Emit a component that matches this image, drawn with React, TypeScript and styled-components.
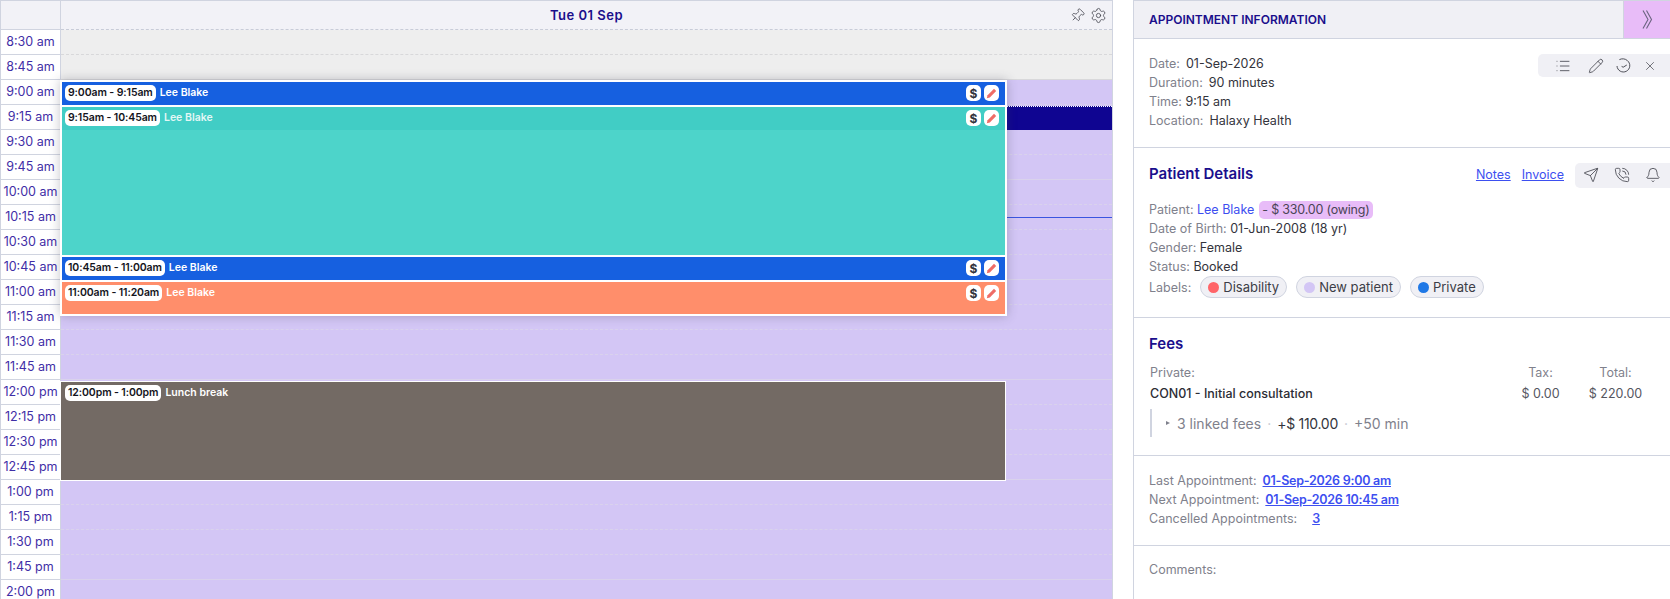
import React from "react";
import styled, { createGlobalStyle } from "styled-components";
import { Bell, List, Pencil, PhoneCall, Pin, Send, Settings, X } from "lucide-react";

const GlobalStyle = createGlobalStyle`
  html, body { margin: 0; padding: 0; background: #fff; }
  body { font-family: Inter, "Noto Sans", sans-serif; font-size: 13px; color: #33343c; overflow: hidden; }
`;

const times = [
  "8:30 am", "8:45 am", "9:00 am", "9:15 am", "9:30 am", "9:45 am", "10:00 am", "10:15 am",
  "10:30 am", "10:45 am", "11:00 am", "11:15 am", "11:30 am", "11:45 am", "12:00 pm", "12:15 pm",
  "12:30 pm", "12:45 pm", "1:00 pm", "1:15 pm", "1:30 pm", "1:45 pm", "2:00 pm",
];

const popupEvents = [
  { time: "9:00am - 9:15am", name: "Lee Blake", color: "#1660e0", height: 23, faded: false },
  { time: "9:15am - 10:45am", name: "Lee Blake", color: "#4dd4ca", band: "#41cdc5", height: 148, faded: true },
  { time: "10:45am - 11:00am", name: "Lee Blake", color: "#1660e0", height: 23, faded: false },
  { time: "11:00am - 11:20am", name: "Lee Blake", color: "#ff8e6b", height: 32, faded: false },
];

export default function App() {
  return (
    <Page>
      <GlobalStyle />
      <Calendar>
        <CornerCell />
        <DayHeader>
          Tue 01 Sep
          <HeaderIcons>
            <Pin size={15} strokeWidth={1.3} style={{ transform: "rotate(45deg)" }} />
            <Settings size={17} strokeWidth={1.2} />
          </HeaderIcons>
        </DayHeader>
        <TimeColumn>
          {times.map((t) => (
            <TimeCell key={t}>{t}</TimeCell>
          ))}
        </TimeColumn>
        <DayColumn>
          {times.map((t, i) => (
            <Slot key={t} $closed={i < 2} $hour={(i + 3) % 4 === 0} />
          ))}
          <SelectedBar />
          <NowLine />
          <Popup>
            {popupEvents.map((ev) => (
              <EventCard key={ev.time} $color={ev.color} $height={ev.height}>
                <EventHead $band={ev.band} $faded={ev.faded}>
                  <TimePill>{ev.time}</TimePill>
                  <EventName>{ev.name}</EventName>
                  <EventChips>
                    <Chip>$</Chip>
                    <Chip>
                      <RedPencil />
                    </Chip>
                  </EventChips>
                </EventHead>
              </EventCard>
            ))}
          </Popup>
          <LunchBlock>
            <EventHead>
              <TimePill>12:00pm - 1:00pm</TimePill>
              <EventName>Lunch break</EventName>
            </EventHead>
          </LunchBlock>
        </DayColumn>
      </Calendar>

      <Panel>
        <PanelHeader>
          <PanelTitle>APPOINTMENT INFORMATION</PanelTitle>
          <CollapseButton>
            <svg width="11" height="19" viewBox="0 0 11 19" fill="none" stroke="#6b6480" strokeWidth="1.1">
              <path d="M1 .5l5 9-5 9" />
              <path d="M4.5 .5l5 9-5 9" />
            </svg>
          </CollapseButton>
        </PanelHeader>

        <InfoSection>
          <div>
            <InfoLine><Label>Date:</Label><Gap />01-Sep-2026</InfoLine>
            <InfoLine><Label>Duration:</Label><Gap />90 minutes</InfoLine>
            <InfoLine><Label>Time:</Label> 9:15 am</InfoLine>
            <InfoLine><Label>Location:</Label><Gap />Halaxy Health</InfoLine>
          </div>
          <AppointmentToolbar>
            <List size={16} strokeWidth={1.2} />
            <Pencil size={16} strokeWidth={1.2} />
            <ClockSweep />
            <X size={14} strokeWidth={1.2} />
          </AppointmentToolbar>
        </InfoSection>

        <PatientSection>
          <SectionHead>
            <SectionTitle>Patient Details</SectionTitle>
            <HeadActions>
              <TextLink href="#">Notes</TextLink>
              <TextLink href="#">Invoice</TextLink>
              <PatientToolbar>
                <Send size={16} strokeWidth={1.2} />
                <PhoneCall size={16} strokeWidth={1.2} />
                <Bell size={16} strokeWidth={1.2} />
              </PatientToolbar>
            </HeadActions>
          </SectionHead>
          <InfoLine>
            <Label>Patient:</Label> <PatientName>Lee Blake</PatientName>
            <OwingBadge>- $ 330.00 (owing)</OwingBadge>
          </InfoLine>
          <InfoLine><Label>Date of Birth:</Label> 01-Jun-2008 (18 yr)</InfoLine>
          <InfoLine><Label>Gender:</Label> Female</InfoLine>
          <InfoLine><Label>Status:</Label> Booked</InfoLine>
          <LabelRow>
            <Label>Labels:</Label>
            <Tag><TagDot $color="#ff6468" />Disability</Tag>
            <Tag><TagDot $color="#d3c6f5" />New patient</Tag>
            <Tag><TagDot $color="#1f78e6" />Private</Tag>
          </LabelRow>
        </PatientSection>

        <FeesSection>
          <SectionTitle>Fees</SectionTitle>
          <FeesGrid>
            <Label>Private:</Label>
            <FeeHead>Tax:</FeeHead>
            <FeeHead>Total:</FeeHead>
            <FeeName>CON01 - Initial consultation</FeeName>
            <FeeAmount>$ 0.00</FeeAmount>
            <FeeAmount>$ 220.00</FeeAmount>
          </FeesGrid>
          <LinkedFees>
            <Caret />
            3 linked fees
            <Dot>·</Dot>
            <LinkedAmount>+$ 110.00</LinkedAmount>
            <Dot>·</Dot>
            +50 min
          </LinkedFees>
        </FeesSection>

        <HistorySection>
          <InfoLine><Label>Last Appointment:</Label><Gap /><HistoryLink href="#">01-Sep-2026 9:00 am</HistoryLink></InfoLine>
          <InfoLine><Label>Next Appointment:</Label><Gap /><HistoryLink href="#">01-Sep-2026 10:45 am</HistoryLink></InfoLine>
          <InfoLine><Label>Cancelled Appointments:</Label><WideGap /><HistoryLink href="#">3</HistoryLink></InfoLine>
        </HistorySection>

        <CommentsSection>
          <Label>Comments:</Label>
        </CommentsSection>
      </Panel>
    </Page>
  );
}

function RedPencil() {
  return (
    <svg width="11" height="11" viewBox="0 0 11 11">
      <path d="M8 .8l2.2 2.2-6.4 6.4L.8 10.2l.8-3z" fill="#ee6c66" />
    </svg>
  );
}

function ClockSweep() {
  return (
    <svg width="15" height="15" viewBox="0 0 15 15" fill="none" stroke="#3c3d46" strokeWidth="0.9">
      <path d="M3.4 1.6c2.6-1.3 5.8-1 8 1A6.4 6.4 0 1 1 1 8" />
      <path d="M5.6 8.4l1.6.8 3.6-2.2" />
    </svg>
  );
}

const Page = styled.div`
  display: flex;
  width: 1670px;
  height: 599px;
  overflow: hidden;
`;

const Calendar = styled.div`
  display: grid;
  grid-template-columns: 61px 1051px;
  grid-template-rows: 30px 1fr;
  width: 1113px;
  height: 599px;
  flex: none;
  border-right: 1px solid #d0d4e0;
  box-sizing: border-box;
  overflow: hidden;
`;

const CornerCell = styled.div`
  background: #f2f2f7;
  border: 1px solid #d0d4e0;
`;

const DayHeader = styled.div`
  position: relative;
  display: flex;
  align-items: center;
  justify-content: center;
  background: #f2f2f7;
  border-top: 1px solid #d0d4e0;
  border-bottom: 1px dashed #c8ccd8;
  color: #1a0e8c;
  font-size: 13px;
  font-weight: 600;
  letter-spacing: 0.5px;
`;

const HeaderIcons = styled.div`
  position: absolute;
  right: 5px;
  top: 6px;
  display: flex;
  align-items: center;
  gap: 5px;
  color: #4c4d56;
`;

const TimeColumn = styled.div`
  display: flex;
  flex-direction: column;
  border-left: 1px solid #d0d4e0;
  border-right: 1px solid #d0d4e0;
`;

const TimeCell = styled.div`
  flex: none;
  height: 25px;
  box-sizing: border-box;
  display: flex;
  align-items: center;
  justify-content: center;
  padding-bottom: 2px;
  border-bottom: 1px solid #d0d4e0;
  color: #3f2ea6;
  font-size: 12.5px;
  white-space: nowrap;
`;

const DayColumn = styled.div`
  position: relative;
  display: flex;
  flex-direction: column;
`;

const Slot = styled.div<{ $closed: boolean; $hour: boolean }>`
  flex: none;
  height: 25px;
  box-sizing: border-box;
  background: ${(p) => (p.$closed ? "#eeeeee" : "#d3c6f5")};
  border-bottom: 1px ${(p) => (p.$hour ? "solid" : "dashed")} ${(p) => (p.$closed ? "#d8d8da" : "#d9d2ec")};
`;

const SelectedBar = styled.div`
  position: absolute;
  left: 946px;
  right: 0;
  top: 76px;
  height: 24px;
  background: #0f0591;
  border-top: 1px dotted #fff;
  box-sizing: border-box;
`;

const NowLine = styled.div`
  position: absolute;
  left: 946px;
  right: 0;
  top: 187px;
  height: 1px;
  background: #3a55e0;
`;

const Popup = styled.div`
  position: absolute;
  left: -1px;
  top: 50px;
  width: 947px;
  box-sizing: border-box;
  display: flex;
  flex-direction: column;
  gap: 2px;
  padding: 2px;
  background: #fff;
  box-shadow: 0 0 10px rgba(60, 60, 80, 0.3);
`;

const EventCard = styled.div<{ $color: string; $height: number }>`
  height: ${(p) => p.$height}px;
  background: ${(p) => p.$color};
`;

const EventHead = styled.div<{ $band?: string; $faded?: boolean }>`
  display: flex;
  align-items: center;
  height: 23px;
  box-sizing: border-box;
  padding: 3px 6px 4px 3px;
  background: ${(p) => p.$band ?? "transparent"};
  color: ${(p) => (p.$faded ? "#e3f7f5" : "#fff")};
`;

const TimePill = styled.span`
  display: inline-block;
  height: 16px;
  line-height: 15px;
  padding: 0 3px;
  border-radius: 5px;
  background: #fff;
  color: #14141c;
  font-size: 10.5px;
  font-weight: 600;
  letter-spacing: -0.1px;
  white-space: nowrap;
`;

const EventName = styled.span`
  margin-left: 4px;
  margin-bottom: 1px;
  font-size: 10.5px;
  font-weight: 600;
`;

const EventChips = styled.span`
  margin-left: auto;
  display: flex;
  gap: 3px;
`;

const Chip = styled.span`
  width: 15px;
  height: 16px;
  border-radius: 5px;
  background: #fff;
  display: flex;
  align-items: center;
  justify-content: center;
  color: #33343c;
  font-size: 12px;
  font-weight: 700;
`;

const LunchBlock = styled.div`
  position: absolute;
  left: -1px;
  top: 351px;
  width: 946px;
  height: 100px;
  box-sizing: border-box;
  padding: 0 1px;
  background: #736a64;
  border: 1px solid #fff;
  color: #fff;
`;

const Panel = styled.div`
  margin-left: 20px;
  flex: 1;
  min-width: 0;
  display: flex;
  flex-direction: column;
  border-left: 1px solid #d0d4e0;
  height: 599px;
`;

const PanelHeader = styled.div`
  display: flex;
  align-items: stretch;
  justify-content: space-between;
  height: 39px;
  flex: none;
  box-sizing: border-box;
  background: #f0f0f5;
  border-top: 1px solid #d0d4e0;
  border-bottom: 1px solid #d0d4e0;
`;

const PanelTitle = styled.div`
  align-self: center;
  margin: 0 0 1px 15px;
  color: #1a0e8c;
  font-size: 12px;
  font-weight: 600;
`;

const CollapseButton = styled.div`
  width: 46px;
  display: flex;
  align-items: center;
  justify-content: center;
  background: #e8bcf8;
  border-left: 1px solid #d0d4e0;
`;

const Section = styled.section`
  flex: none;
  box-sizing: border-box;
  padding-left: 15px;
  border-bottom: 1px solid #d0d4e0;
`;

const InfoSection = styled(Section)`
  display: flex;
  justify-content: space-between;
  align-items: flex-start;
  height: 109px;
  padding-top: 15px;
`;

const InfoLine = styled.div`
  height: 19px;
  line-height: 19px;
  white-space: nowrap;
  font-size: 12.5px;
`;

const Label = styled.span`
  color: #7f818c;
  font-size: 12.5px;
`;

const Gap = styled.span`
  display: inline-block;
  width: 6px;
`;

const WideGap = styled.span`
  display: inline-block;
  width: 15px;
`;

const Toolbar = styled.div`
  flex: none;
  box-sizing: border-box;
  display: flex;
  align-items: center;
  background: #f0f0f5;
  border-radius: 5px 0 0 5px;
  color: #3c3d46;
`;

const AppointmentToolbar = styled(Toolbar)`
  width: 132px;
  height: 23px;
  gap: 12px;
  padding-left: 17px;

  & > :first-child { margin-right: 5px; }
`;

const PatientToolbar = styled(Toolbar)`
  width: 95px;
  height: 25px;
  gap: 15px;
  padding-left: 8px;
`;

const PatientSection = styled(Section)`
  height: 170px;
  padding-top: 13px;
`;

const SectionHead = styled.div`
  display: flex;
  justify-content: space-between;
  align-items: center;
  height: 24px;
  margin-bottom: 15px;
`;

const SectionTitle = styled.div`
  color: #1a0e8c;
  font-size: 15px;
  font-weight: 600;
`;

const HeadActions = styled.div`
  display: flex;
  align-items: center;
  gap: 11px;
  margin-top: 4px;
`;

const TextLink = styled.a`
  margin-bottom: 2px;
  color: #3d4ff0;
  font-size: 12.5px;
`;

const PatientName = styled.span`
  color: #3d4ff0;
`;

const OwingBadge = styled.span`
  display: inline-block;
  margin-left: 5px;
  padding: 0 3px;
  height: 18px;
  line-height: 18px;
  border-radius: 5px;
  background: #e8bcf8;
  color: #4a4455;
  letter-spacing: -0.2px;
`;

const LabelRow = styled.div`
  display: flex;
  align-items: center;
  height: 22px;
`;

const Tag = styled.span`
  display: inline-flex;
  align-items: center;
  gap: 4px;
  height: 22px;
  box-sizing: border-box;
  margin-left: 9px;
  padding: 0 7px;
  border: 1px solid #d0d4e0;
  border-radius: 11px;
  background: #f0f0f5;
  font-size: 13px;
  color: #3c3d46;

  &:first-of-type { margin-left: 7px; }
`;

const TagDot = styled.i<{ $color: string }>`
  width: 11px;
  height: 11px;
  border-radius: 50%;
  background: ${(p) => p.$color};
`;

const FeesSection = styled(Section)`
  height: 138px;
  padding-top: 16px;
`;

const FeesGrid = styled.div`
  display: grid;
  grid-template-columns: 1fr 75px 75px;
  grid-auto-rows: 21px;
  align-items: center;
  margin: 9px 17px 0 1px;
`;

const FeeHead = styled.span`
  color: #7f818c;
  font-size: 12.5px;
  text-align: center;
`;

const FeeName = styled.span`
  font-size: 12.5px;
  font-weight: 500;
  color: #2c2d35;
`;

const FeeAmount = styled.span`
  font-size: 12.5px;
  text-align: center;
  color: #55565f;
`;

const LinkedFees = styled.div`
  display: flex;
  align-items: center;
  height: 28px;
  margin: 5px 0 0 1px;
  padding-left: 14px;
  border-left: 2px solid #d0d4e0;
  color: #7f818c;
  font-size: 14px;
`;

const Caret = styled.i`
  width: 0;
  height: 0;
  margin-right: 7px;
  border-left: 4px solid #7f818c;
  border-top: 2.5px solid transparent;
  border-bottom: 2.5px solid transparent;
`;

const Dot = styled.span`
  margin: 0 6px;
  color: #c4c6d0;
`;

const LinkedAmount = styled.span`
  color: #33343c;
  letter-spacing: -0.3px;
`;

const HistorySection = styled(Section)`
  height: 90px;
  padding-top: 15px;
`;

const HistoryLink = styled.a`
  color: #3d4ff0;
  font-weight: 600;
  letter-spacing: -0.25px;
`;

const CommentsSection = styled.section`
  padding: 15px 15px 0;
`;
